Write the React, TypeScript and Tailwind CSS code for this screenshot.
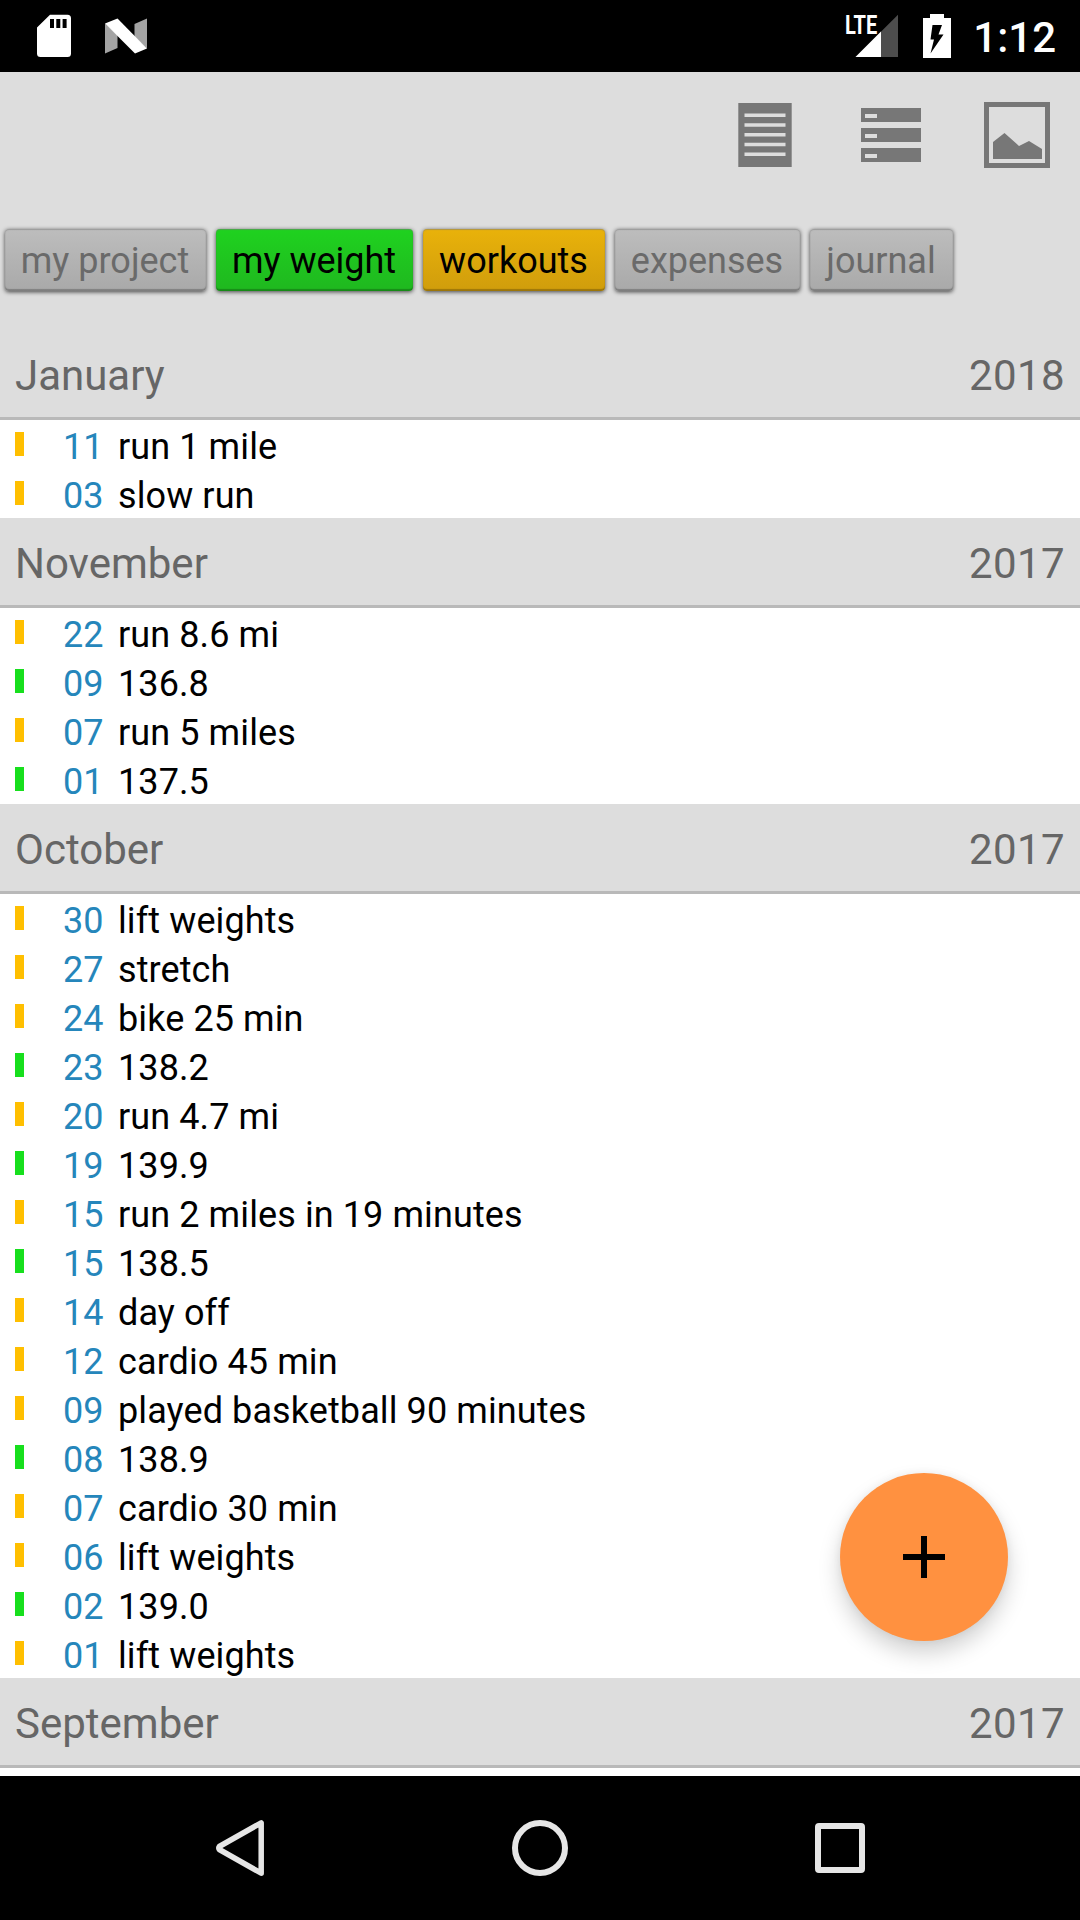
import React from 'react';
import clsx from 'clsx';

type Tag = 'weight' | 'workout';

interface Entry {
  day: string;
  text: string;
  tag: Tag;
}

interface MonthGroup {
  month: string;
  year: string;
  entries: Entry[];
}

const tagColors: Record<Tag, string> = {
  weight: 'bg-[#17df1d]',
  workout: 'bg-[#ffbf00]'
};

const tabs = [
  { label: 'my project', width: 'w-[201px]', color: 'from-[#bdbdbd] to-[#a9a9a9] text-[#6a6a6a]' },
  { label: 'my weight', width: 'w-[197px]', color: 'from-[#1fd21f] to-[#1fb81f] text-black' },
  { label: 'workouts', width: 'w-[182px]', color: 'from-[#e9b20a] to-[#d09d0c] text-black' },
  { label: 'expenses', width: 'w-[185px]', color: 'from-[#bdbdbd] to-[#a9a9a9] text-[#6a6a6a]' },
  { label: 'journal', width: 'w-[143px]', color: 'from-[#bdbdbd] to-[#a9a9a9] text-[#6a6a6a]' }
];

const groups: MonthGroup[] = [
  {
    month: 'January',
    year: '2018',
    entries: [
      { day: '11', text: 'run 1 mile', tag: 'workout' },
      { day: '03', text: 'slow run', tag: 'workout' }
    ]
  },
  {
    month: 'November',
    year: '2017',
    entries: [
      { day: '22', text: 'run 8.6 mi', tag: 'workout' },
      { day: '09', text: '136.8', tag: 'weight' },
      { day: '07', text: 'run 5 miles', tag: 'workout' },
      { day: '01', text: '137.5', tag: 'weight' }
    ]
  },
  {
    month: 'October',
    year: '2017',
    entries: [
      { day: '30', text: 'lift weights', tag: 'workout' },
      { day: '27', text: 'stretch', tag: 'workout' },
      { day: '24', text: 'bike 25 min', tag: 'workout' },
      { day: '23', text: '138.2', tag: 'weight' },
      { day: '20', text: 'run 4.7 mi', tag: 'workout' },
      { day: '19', text: '139.9', tag: 'weight' },
      { day: '15', text: 'run 2 miles in 19 minutes', tag: 'workout' },
      { day: '15', text: '138.5', tag: 'weight' },
      { day: '14', text: 'day off', tag: 'workout' },
      { day: '12', text: 'cardio 45 min', tag: 'workout' },
      { day: '09', text: 'played basketball 90 minutes', tag: 'workout' },
      { day: '08', text: '138.9', tag: 'weight' },
      { day: '07', text: 'cardio 30 min', tag: 'workout' },
      { day: '06', text: 'lift weights', tag: 'workout' },
      { day: '02', text: '139.0', tag: 'weight' },
      { day: '01', text: 'lift weights', tag: 'workout' }
    ]
  },
  { month: 'September', year: '2017', entries: [] }
];

const StatusBar: React.FC = () => (
  <div className="flex h-[72px] shrink-0 items-start justify-between bg-black pl-[37px] pr-6 text-white">
    <div className="flex">
      {/* SD card */}
      <svg className="mt-[14px] h-[44px] w-[34px]" viewBox="0 0 34 44">
        <path d="M13 .8H30.500a3.500 3.500 0 0 1 3.500 3.500V39.500a3.500 3.500 0 0 1-3.500 3.500H3.500A3.500 3.500 0 0 1 0 39.500V13.500Z" fill="#fff" />
        <path d="M13 5h4v9h-4zM19.300 5h4v9h-4zM25.600 5h4v9h-4z" fill="#000" />
      </svg>
      {/* Nougat */}
      <svg className="ml-[34px] mt-[18px] h-[36px] w-[42px]" viewBox="0 0 42 36">
        <path d="M0 5.500 12.500 17V30L0 35.500ZM29.500 6 42 .5V30.500L29.500 19Z" fill="#a3a3a3" />
        <path d="M0 5.500 12.500.5 42 30.500 30 35.500Z" fill="#fff" />
      </svg>
    </div>
    <div className="flex">
      <div className="relative mt-[14px] h-[44px] w-[54px]">
        <svg className="h-full w-full" viewBox="0 0 54 44">
          <path d="M53 .8V43H10.500Z" fill="#4d4d4d" />
          <path d="M36 17.600V43H10.500Z" fill="#fff" />
        </svg>
        <span className="absolute left-0 top-[-2px] origin-left scale-x-[.77] text-[26px] font-bold leading-[26px]">LTE</span>
      </div>
      <svg className="ml-[24px] mt-[14px] h-[44px] w-[28px]" viewBox="0 0 28 44">
        <path d="M7 0h14v4h7v40H0V4h7Z" fill="#fff" />
        <path d="M9.500 11H19l-3.500 9.500h5L7.500 39.500l3.500-14H7.500Z" fill="#000" />
      </svg>
      <span className="ml-[22px] mt-[13px] text-[42px] font-medium leading-[49px]">1:12</span>
    </div>
  </div>
);

const Toolbar: React.FC = () => (
  <div className="flex h-[157px] shrink-0 items-start justify-end pr-[30px] text-[#777]">
    <svg className="mt-[31px] h-[64px] w-[54px]" viewBox="0 0 54 64">
      <path d="M.3 0h53.400v64H.3Z" fill="currentColor" />
      <path d="M6.500 12.300h41M6.500 22h41M6.500 31.800h41M6.500 41.500h41M6.500 51.300h41" stroke="#ddd" strokeWidth="3.500" />
    </svg>
    <svg className="ml-[69px] mt-[36px] h-[54px] w-[60px]" viewBox="0 0 60 54">
      <path d="M0 0h60v14H0ZM0 20h60v14H0ZM0 40h60v14H0Z" fill="currentColor" />
      <path d="M4 6h12v4H4ZM4 26h12v4H4ZM4 46h12v4H4Z" fill="#ddd" />
    </svg>
    <svg className="ml-[63px] mt-[30px] h-[66px] w-[66px]" viewBox="0 0 66 66">
      <path d="M2.500 2.500h61v61h-61Z" fill="none" stroke="currentColor" strokeWidth="5" />
      <path d="M9 40 20.500 31 35 44 45 39 58 47V57H9Z" fill="currentColor" />
    </svg>
  </div>
);

const TabRow: React.FC = () => (
  <div className="flex h-[101px] shrink-0 items-start gap-[10px] pl-[5px]">
    {tabs.map(tab => (
      <button
        key={tab.label}
        className={clsx(
          'h-[62px] rounded-[4px] bg-linear-to-b pt-[2px] pr-px text-[36px] leading-[60px] whitespace-nowrap shadow-[0_1px_4px_rgba(0,0,0,.7),inset_0_-2px_1px_rgba(0,0,0,.25),inset_0_1px_1px_rgba(120,120,120,.5)]',
          tab.width,
          tab.color
        )}
      >
        {tab.label}
      </button>
    ))}
  </div>
);

const MonthSection: React.FC<{ group: MonthGroup }> = ({ group }) => (
  <section>
    <h2 className="flex h-[90px] justify-between border-b-[3px] border-[#b9b9b9] bg-[#ddd] px-[15px] text-[42px] leading-[91px] text-[#666]">
      <span>{group.month}</span>
      <span className="tracking-[.4px]">{group.year}</span>
    </h2>
    {group.entries.map((entry, index) => (
      <div key={index} className="flex h-[49px] items-start pl-[15px] text-[36px] leading-[54px]">
        <div className={clsx('mt-[12px] h-[24px] w-[9px]', tagColors[entry.tag])} />
        <span className="ml-[39px] w-[55px] text-[#2586bb]">{entry.day}</span>
        <span className="whitespace-pre tracking-[.1px] text-black">{entry.text}</span>
      </div>
    ))}
  </section>
);

const NavBar: React.FC = () => (
  <div className="flex h-[144px] shrink-0 items-center justify-between bg-black px-[210px]">
    <svg className="h-[60px] w-[60px]" viewBox="0 0 60 60" fill="none" stroke="#e6e6e6" strokeWidth="5.500" strokeLinejoin="round">
      <path d="M51.200 4.800V55.200L9.300 31.500Q8.300 30 9.300 28.500Z" />
    </svg>
    <svg className="h-[60px] w-[60px]" viewBox="0 0 60 60" fill="none" stroke="#e6e6e6" strokeWidth="6">
      <circle cx="30" cy="30" r="25" />
    </svg>
    <svg className="h-[60px] w-[60px]" viewBox="0 0 60 60" fill="none" stroke="#e6e6e6" strokeWidth="6">
      <rect x="8" y="8" width="44" height="44" rx="1" />
    </svg>
  </div>
);

export default function App() {
  return (
    <div className="relative flex h-[1920px] w-[1080px] flex-col overflow-hidden bg-[#ddd] font-['Roboto',sans-serif]">
      <StatusBar />
      <Toolbar />
      <TabRow />
      <main className="flex-1 bg-white">
        {groups.map(group => (
          <MonthSection key={`${group.month}-${group.year}`} group={group} />
        ))}
      </main>
      <NavBar />

      {/* Add entry */}
      <button
        aria-label="Add entry"
        className="absolute left-[840px] top-[1473px] flex size-[168px] items-center justify-center rounded-full bg-[#ff9140] shadow-[0_12px_22px_rgba(0,0,0,.18),0_0_8px_rgba(0,0,0,.06)]"
      >
        <svg className="size-[42px]" viewBox="0 0 42 42">
          <path d="M18 0h6v18h18v6H24v18h-6V24H0v-6h18Z" />
        </svg>
      </button>
    </div>
  );
}
